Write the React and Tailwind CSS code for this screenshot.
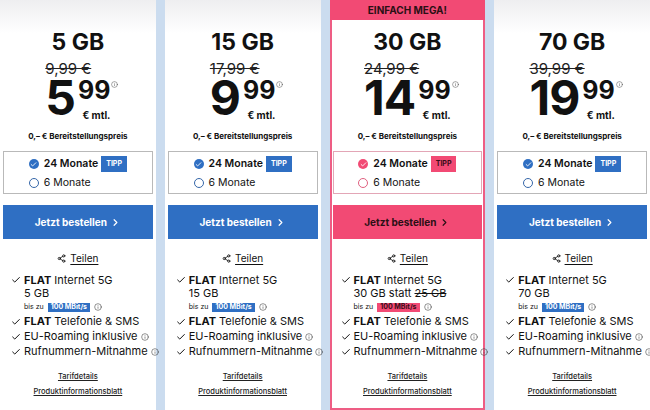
import React from "react";
import { Check, ChevronRight, Share2, Info } from "lucide-react";

const plans = [
  { gb: "5 GB", old: "9,99 €", main: "5", feat: "5 GB" },
  { gb: "15 GB", old: "17,99 €", main: "9", feat: "15 GB" },
  { gb: "30 GB", old: "24,99 €", main: "14", feat: "30 GB", hl: true },
  { gb: "70 GB", old: "39,99 €", main: "19", feat: "70 GB" },
];

function Feature({ children, check = true }) {
  return (
    <div className="flex items-center h-[15px] whitespace-nowrap">
      <span className="w-[13px] flex-none flex items-center">
        {check && <Check size={10} strokeWidth={2.4} className="text-[#111]" />}
      </span>
      <span className="flex items-center">{children}</span>
    </div>
  );
}

function Card({ p }) {
  const hl = p.hl;
  const accentBg = hl ? "bg-[#f24a74]" : "bg-[#2f6fc3]";
  return (
    <div
      className={`flex-1 min-w-0 flex flex-col ${
        hl
          ? "border-2 border-[#ee5d84] border-t-0 bg-white px-[1px]"
          : "bg-linear-to-b from-[#eeeef0] to-white to-8% px-[3px]"
      }`}
    >
      {hl ? (
        <div className="h-[20px] -mx-[3px] bg-[#f24a74] flex items-center justify-center text-[10px] font-bold text-[#2b1015]">
          EINFACH MEGA!
        </div>
      ) : (
        <div className="h-[20px]" />
      )}
      <div className="mt-[8px] h-[28px] leading-[28px] text-center text-[23px] font-bold text-[#111]">
        {p.gb}
      </div>
      <div className="mx-auto w-fit flex flex-col items-start">
        <div className="mt-[4px] text-[15px] leading-[18px] line-through text-[#222]">
          {p.old}
        </div>
        <div className="flex h-[41px] text-[#111]">
          <span className="text-[48px] leading-[40px] font-bold tracking-[-1px]">
            {p.main}
          </span>
          <div className="ml-[3px] flex flex-col items-end">
            <span className="relative mt-[1px] text-[25px] leading-[22px] font-bold">
              99
              <Info
                size={7}
                strokeWidth={1.6}
                className="absolute -right-[8px] top-[2px] text-[#444]"
              />
            </span>
            <span className="mt-[8px] text-[10px] leading-[12px] font-bold">€ mtl.</span>
          </div>
        </div>
      </div>
      <div className="mt-[12px] text-center text-[8px] leading-[11px] font-bold text-[#111]">
        0,– € Bereitstellungspreis
      </div>
      <div
        className={`mt-[9px] h-[43px] border flex justify-center ${
          hl ? "border-[#e3a6b6]" : "border-[#b9b9b9]"
        }`}
      >
        <div className="flex flex-col pt-[3px] gap-[1px]">
          <div className="flex items-center h-[18px]">
            <span
              className={`w-[10px] h-[10px] rounded-full flex items-center justify-center ${accentBg}`}
            >
              <Check size={7} strokeWidth={3} className="text-white" />
            </span>
            <span className="ml-[5px] text-[10.5px] font-semibold text-[#111]">24 Monate</span>
            <span
              className={`ml-[3px] h-[16px] px-[5px] flex items-center text-[7px] font-bold ${accentBg} ${
                hl ? "text-[#3a0d18]" : "text-white"
              }`}
            >
              TIPP
            </span>
          </div>
          <div className="flex items-center h-[18px]">
            <span
              className={`w-[10px] h-[10px] rounded-full border ${
                hl ? "border-[#e0607f]" : "border-[#3566a8]"
              }`}
            />
            <span className="ml-[5px] text-[10.5px] text-[#111]">6 Monate</span>
          </div>
        </div>
      </div>
      <div
        className={`mt-[11px] h-[34px] flex items-center justify-center gap-[3px] text-[10px] font-bold ${accentBg} ${
          hl ? "text-[#2b1015]" : "text-white"
        }`}
      >
        Jetzt bestellen
        <ChevronRight size={11} strokeWidth={2.6} />
      </div>
      <div className="mt-[11px] h-[16px] flex items-center justify-center gap-[4px] text-[10px] text-[#111]">
        <Share2 size={9} strokeWidth={2.2} />
        <span className="underline underline-offset-2">Teilen</span>
      </div>
      <div className="mt-[7px] pl-[8px] text-[11px] text-[#111] flex flex-col">
        <div className="flex items-center h-[14px] whitespace-nowrap">
          <span className="w-[13px] flex-none flex items-center">
            <Check size={10} strokeWidth={2.4} />
          </span>
          <span>
            <b>FLAT</b> Internet 5G
          </span>
        </div>
        <div className="h-[13px] leading-[13px] pl-[13px] whitespace-nowrap">
          {p.feat}
          {hl && (
            <>
              {" "}statt <span className="line-through">25 GB</span>
            </>
          )}
        </div>
        <div className="h-[14px] pl-[13px] flex items-center whitespace-nowrap">
          <span className="text-[7px]">bis zu</span>
          <span
            className={`ml-[4px] h-[9px] px-[3px] flex items-center text-[7px] font-bold ${accentBg} ${
              hl ? "text-[#3a0d18]" : "text-white"
            }`}
          >
            100 MBit/s
          </span>
          <Info size={8} strokeWidth={1.6} className="ml-[4px] text-[#333]" />
        </div>
        <Feature>
          <span>
            <b>FLAT</b> Telefonie &amp; SMS
          </span>
        </Feature>
        <Feature>
          EU-Roaming inklusive
          <Info size={8} strokeWidth={1.6} className="ml-[3px] text-[#333]" />
        </Feature>
        <Feature>
          Rufnummern-Mitnahme
          <Info size={8} strokeWidth={1.6} className="ml-[3px] text-[#333]" />
        </Feature>
      </div>
      <div className="mt-[12px] text-center text-[7.5px] leading-[12px] font-medium underline text-[#222]">
        Tarifdetails
      </div>
      <div className="mt-[3px] text-center text-[7.5px] leading-[12px] font-medium underline text-[#222]">
        Produktinformationsblatt
      </div>
    </div>
  );
}

export default function App() {
  return (
    <div className="w-[650px] h-[410px] overflow-hidden flex gap-[9px] bg-[#cbdcef] font-['Inter','Liberation_Sans',sans-serif]">
      {plans.map((p) => (
        <Card key={p.gb} p={p} />
      ))}
    </div>
  );
}
